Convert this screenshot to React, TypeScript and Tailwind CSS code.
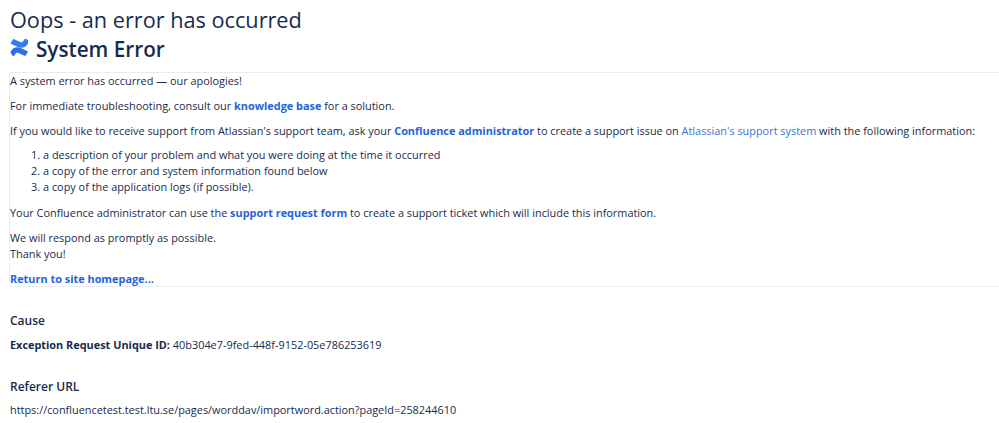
const font = { fontFamily: '"Open Sans", "Noto Sans", sans-serif' };

function Logo() {
  return (
    <svg width="19" height="17" viewBox="0 0 19 17" className="shrink-0 -mt-[3px]">
      <path d="M0.6 12.6c2.9-4.6 6.4-5.4 11.2-3.1l5.4 2.6c.5.2.7.8.4 1.3l-1.9 3.1c-.2.4-.8.6-1.2.3l-4.9-2.4c-2-1-3.5-.6-4.7 1.2l-.9 1.4c-.3.4-.8.5-1.2.3L.9 14c-.5-.3-.6-.9-.3-1.4z" fill="#2f6fe4" />
      <path d="M18 4.4c-2.9 4.6-6.4 5.4-11.2 3.1L1.4 4.9C.9 4.7.7 4.1 1 3.6L2.9.5c.2-.4.8-.6 1.2-.3L9 2.6c2 1 3.5.6 4.7-1.2l.9-1.4c.3-.4.8-.5 1.2-.3l2 1.3c.5.3.6.9.2 1.4z" fill="#2f7df0" />
    </svg>
  );
}

export default function App() {
  return (
    <div className="w-[999px] h-[423px] overflow-hidden bg-white text-[#172b4d] text-[10.9px] leading-[16px]" style={font}>
      <div className="pl-[10px]">
        <h1 className="text-[21.7px] leading-[32px] text-[#172b4d] pt-[4px]">Oops - an error has occurred</h1>
        <h2 className="flex items-center gap-[7px] text-[20.7px] leading-[30px] font-semibold h-[30px] -mt-[2px]">
          <Logo />
          System Error
        </h2>
      </div>
      <div className="mt-[8px] border-t border-l border-b border-[#ebecf0] rounded-tl-[3px] rounded-bl-[3px] ml-[9px] h-[215px]">
        <p>A system error has occurred — our apologies!</p>
        <p className="mt-[9px]">
          For immediate troubleshooting, consult our <a className="font-bold text-[#2563dc]">knowledge base</a> for a solution.
        </p>
        <p className="mt-[9px]">
          If you would like to receive support from Atlassian's support team, ask your <a className="font-bold text-[#2563dc]">Confluence administrator</a> to create a support issue on <a className="text-[#3b6fd8]">Atlassian's support system</a> with the following information:
        </p>
        <ol className="list-decimal pl-[33px] mt-[8px]">
          <li>a description of your problem and what you were doing at the time it occurred</li>
          <li>a copy of the error and system information found below</li>
          <li>a copy of the application logs (if possible).</li>
        </ol>
        <p className="mt-[10px]">
          Your Confluence administrator can use the <a className="font-bold text-[#2563dc]">support request form</a> to create a support ticket which will include this information.
        </p>
        <p className="mt-[9px]">We will respond as promptly as possible.</p>
        <p>Thank you!</p>
        <p className="mt-[9px]"><a className="font-bold text-[#2563dc]">Return to site homepage...</a></p>
      </div>
      <div className="pl-[10px]">
        <h3 className="text-[12px] leading-[18px] font-semibold mt-[25px]">Cause</h3>
        <p className="mt-[7px]"><b>Exception Request Unique ID:</b> 40b304e7-9fed-448f-9152-05e786253619</p>
        <h3 className="text-[12px] leading-[18px] font-semibold mt-[25px]">Referer URL</h3>
        <p className="mt-[6px]">https://confluencetest.test.ltu.se/pages/worddav/importword.action?pageId=258244610</p>
      </div>
    </div>
  );
}
